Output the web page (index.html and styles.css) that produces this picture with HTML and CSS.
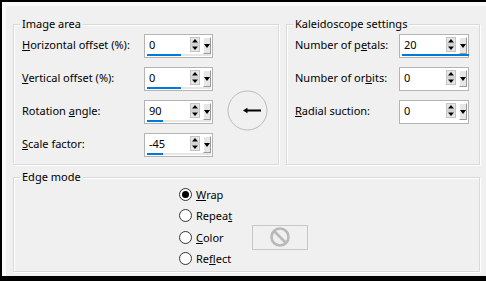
FILE: index.html
```html
<!DOCTYPE html>
<html lang="en">
<head>
  <meta charset="UTF-8" />
  <title>Kaleidoscope</title>
  <link rel="stylesheet" href="styles.css">
</head>
<body>
  <div class="dialog">
    <div class="top-row">
      <section class="group image-area">
        <div class="group-title">Image area</div>
        <div class="fields image-fields">
          <label class="field-label"><u>H</u>orizontal offset (%):</label>
          <div class="spin">
            <div class="spin-row">
              <span class="spin-value">0</span>
              <span class="updown"><svg width="10" height="15" viewBox="0 0 10 15"><rect x="0.5" y="0.5" width="9" height="6.5" fill="#e6e6e6" stroke="#c4c4c4"/><rect x="0.5" y="8" width="9" height="6.5" fill="#e6e6e6" stroke="#c4c4c4"/><path d="M5 2 L8 5.5 L2 5.5 Z" fill="#000"/><path d="M2 9.5 L8 9.5 L5 13 Z" fill="#000"/></svg></span>
              <span class="drop"><svg width="6" height="4" viewBox="0 0 6 4"><path d="M0 0 L6 0 L3 4 Z" fill="#000"/></svg></span>
            </div>
            <div class="track"><div class="fill" style="width:34px"></div></div>
          </div>
          <span></span>

          <label class="field-label"><u>V</u>ertical offset (%):</label>
          <div class="spin">
            <div class="spin-row">
              <span class="spin-value">0</span>
              <span class="updown"><svg width="10" height="15" viewBox="0 0 10 15"><rect x="0.5" y="0.5" width="9" height="6.5" fill="#e6e6e6" stroke="#c4c4c4"/><rect x="0.5" y="8" width="9" height="6.5" fill="#e6e6e6" stroke="#c4c4c4"/><path d="M5 2 L8 5.5 L2 5.5 Z" fill="#000"/><path d="M2 9.5 L8 9.5 L5 13 Z" fill="#000"/></svg></span>
              <span class="drop"><svg width="6" height="4" viewBox="0 0 6 4"><path d="M0 0 L6 0 L3 4 Z" fill="#000"/></svg></span>
            </div>
            <div class="track"><div class="fill" style="width:34px"></div></div>
          </div>
          <span></span>

          <label class="field-label">Rotation <u>a</u>ngle:</label>
          <div class="spin">
            <div class="spin-row">
              <span class="spin-value">90</span>
              <span class="updown"><svg width="10" height="15" viewBox="0 0 10 15"><rect x="0.5" y="0.5" width="9" height="6.5" fill="#e6e6e6" stroke="#c4c4c4"/><rect x="0.5" y="8" width="9" height="6.5" fill="#e6e6e6" stroke="#c4c4c4"/><path d="M5 2 L8 5.5 L2 5.5 Z" fill="#000"/><path d="M2 9.5 L8 9.5 L5 13 Z" fill="#000"/></svg></span>
              <span class="drop"><svg width="6" height="4" viewBox="0 0 6 4"><path d="M0 0 L6 0 L3 4 Z" fill="#000"/></svg></span>
            </div>
            <div class="track"><div class="fill" style="width:16px"></div></div>
          </div>
          <svg class="dial" width="41" height="41" viewBox="0 0 41 41">
            <circle cx="20.5" cy="20.5" r="19.5" fill="none" stroke="#b4b4b4" stroke-width="0.9"/>
            <path d="M16 20.5 L20.5 17.8 L20.5 23.2 Z" fill="#000"/>
            <line x1="19" y1="20.5" x2="34" y2="20.5" stroke="#000" stroke-width="2"/>
          </svg>

          <label class="field-label"><u>S</u>cale factor:</label>
          <div class="spin">
            <div class="spin-row">
              <span class="spin-value">-45</span>
              <span class="updown"><svg width="10" height="15" viewBox="0 0 10 15"><rect x="0.5" y="0.5" width="9" height="6.5" fill="#e6e6e6" stroke="#c4c4c4"/><rect x="0.5" y="8" width="9" height="6.5" fill="#e6e6e6" stroke="#c4c4c4"/><path d="M5 2 L8 5.5 L2 5.5 Z" fill="#000"/><path d="M2 9.5 L8 9.5 L5 13 Z" fill="#000"/></svg></span>
              <span class="drop"><svg width="6" height="4" viewBox="0 0 6 4"><path d="M0 0 L6 0 L3 4 Z" fill="#000"/></svg></span>
            </div>
            <div class="track"><div class="fill" style="width:16px"></div></div>
          </div>
          <span></span>
        </div>
      </section>

      <section class="group kaleido">
        <div class="group-title">Kaleidoscope settings</div>
        <div class="fields kaleido-fields">
          <label class="field-label">Number of p<u>e</u>tals:</label>
          <div class="spin">
            <div class="spin-row">
              <span class="spin-value">20</span>
              <span class="updown"><svg width="10" height="15" viewBox="0 0 10 15"><rect x="0.5" y="0.5" width="9" height="6.5" fill="#e6e6e6" stroke="#c4c4c4"/><rect x="0.5" y="8" width="9" height="6.5" fill="#e6e6e6" stroke="#c4c4c4"/><path d="M5 2 L8 5.5 L2 5.5 Z" fill="#000"/><path d="M2 9.5 L8 9.5 L5 13 Z" fill="#000"/></svg></span>
              <span class="drop"><svg width="6" height="4" viewBox="0 0 6 4"><path d="M0 0 L6 0 L3 4 Z" fill="#000"/></svg></span>
            </div>
            <div class="track"><div class="fill" style="width:67px"></div></div>
          </div>

          <label class="field-label">Number of or<u>b</u>its:</label>
          <div class="spin">
            <div class="spin-row">
              <span class="spin-value">0</span>
              <span class="updown"><svg width="10" height="15" viewBox="0 0 10 15"><rect x="0.5" y="0.5" width="9" height="6.5" fill="#e6e6e6" stroke="#c4c4c4"/><rect x="0.5" y="8" width="9" height="6.5" fill="#e6e6e6" stroke="#c4c4c4"/><path d="M5 2 L8 5.5 L2 5.5 Z" fill="#000"/><path d="M2 9.5 L8 9.5 L5 13 Z" fill="#000"/></svg></span>
              <span class="drop"><svg width="6" height="4" viewBox="0 0 6 4"><path d="M0 0 L6 0 L3 4 Z" fill="#000"/></svg></span>
            </div>
            <div class="track no-track"></div>
          </div>

          <label class="field-label"><u>R</u>adial suction:</label>
          <div class="spin">
            <div class="spin-row">
              <span class="spin-value">0</span>
              <span class="updown"><svg width="10" height="15" viewBox="0 0 10 15"><rect x="0.5" y="0.5" width="9" height="6.5" fill="#e6e6e6" stroke="#c4c4c4"/><rect x="0.5" y="8" width="9" height="6.5" fill="#e6e6e6" stroke="#c4c4c4"/><path d="M5 2 L8 5.5 L2 5.5 Z" fill="#000"/><path d="M2 9.5 L8 9.5 L5 13 Z" fill="#000"/></svg></span>
              <span class="drop"><svg width="6" height="4" viewBox="0 0 6 4"><path d="M0 0 L6 0 L3 4 Z" fill="#000"/></svg></span>
            </div>
            <div class="track no-track"></div>
          </div>
        </div>
      </section>
    </div>

    <section class="group edge">
      <div class="group-title">Edge mode</div>
      <div class="radios">
        <label class="radio-item"><span class="radio checked"><span class="dot"></span></span><span><u>W</u>rap</span></label>
        <label class="radio-item"><span class="radio"></span><span>Repea<u>t</u></span></label>
        <label class="radio-item"><span class="radio"></span><span><u>C</u>olor</span></label>
        <div class="swatch">
          <svg width="22" height="22" viewBox="0 0 22 22">
            <circle cx="11" cy="11" r="8.5" fill="none" stroke="#b9b9b9" stroke-width="2.6"/>
            <line x1="5" y1="5" x2="17" y2="17" stroke="#b9b9b9" stroke-width="2.6"/>
          </svg>
        </div>
        <label class="radio-item"><span class="radio"></span><span>Re<u>f</u>lect</span></label>
      </div>
    </section>
  </div>
</body>
</html>
```

FILE: styles.css
```css
* {
  box-sizing: border-box;
}

body {
  margin: 0;
  background: #fff;
}

.dialog {
  width: 486px;
  height: 281px;
  border-left: 2px solid #000;
  border-top: 2px solid #000;
  border-bottom: 5px solid #000;
  background: #f0f0f0;
  box-shadow: inset 4px 4px 0 #fafafa;
  padding: 22px 6px 0 11px;
  font-family: "Noto Sans", sans-serif;
  font-size: 11px;
  color: #000;
  display: flex;
  flex-direction: column;
}

u {
  text-underline-offset: 1px;
}

.top-row {
  display: flex;
  gap: 7px;
}

.group {
  border: 1px solid #d9d9d9;
  box-shadow: inset 1px 1px 0 #fff, 1px 1px 0 #fff;
}

.group-title {
  width: fit-content;
  margin: -9px 0 2px 6px;
  padding: 0 2px;
  line-height: 16px;
  background: #f0f0f0;
  white-space: nowrap;
}

.image-area {
  width: 266px;
  padding-bottom: 7px;
}

.kaleido {
  flex: 1;
}

.fields {
  display: grid;
  grid-auto-rows: 24px;
  row-gap: 9px;
  padding-left: 8px;
  align-items: center;
}

.image-fields {
  grid-template-columns: 108px 69px 41px;
  column-gap: 14px;
}

.kaleido-fields {
  grid-template-columns: 104px 70px;
}

.field-label {
  white-space: nowrap;
  padding-bottom: 3px;
}

.spin {
  height: 24px;
  border: 1px solid #b4b4b4;
  background: #fff;
  padding-top: 2px;
}

.spin-row {
  display: flex;
  align-items: flex-start;
  height: 16px;
}

.spin-value {
  flex: 1;
  padding-left: 4px;
  line-height: 15px;
}

.updown {
  display: flex;
  width: 10px;
  height: 15px;
  margin-right: 3px;
}

.drop {
  display: flex;
  align-items: center;
  justify-content: center;
  width: 8px;
  height: 17px;
  margin-right: 1px;
  background: #e6e6e6;
  border-top: 1px solid #fff;
  border-left: 1px solid #fff;
  border-right: 1px solid #9a9a9a;
  border-bottom: 1px solid #9a9a9a;
}

.track {
  height: 2px;
  margin: 1px 1px 0 2px;
  background: #e6e6e6;
}

.track.no-track {
  background: transparent;
}

.fill {
  height: 2px;
  background: #0078d7;
}

.dial {
  align-self: start;
  margin-top: -10px;
}

.edge {
  margin-top: 12px;
  height: 95px;
}

.radios {
  display: grid;
  grid-template-columns: 73px 56px;
  grid-auto-rows: 21.33px;
  margin-left: 165px;
  margin-top: -3px;
  align-items: center;
}

.radio-item {
  grid-column: 1;
  display: flex;
  align-items: center;
  gap: 4px;
  white-space: nowrap;
}

.radio {
  display: flex;
  align-items: center;
  justify-content: center;
  width: 13px;
  height: 13px;
  border: 1px solid #333;
  border-radius: 50%;
  background: #fff;
}

.dot {
  width: 7px;
  height: 7px;
  border-radius: 50%;
  background: #000;
}

.swatch {
  grid-column: 2;
  grid-row: 3;
  height: 25px;
  border: 1px solid #c8c8c8;
  display: flex;
  align-items: center;
  justify-content: center;
}
```
